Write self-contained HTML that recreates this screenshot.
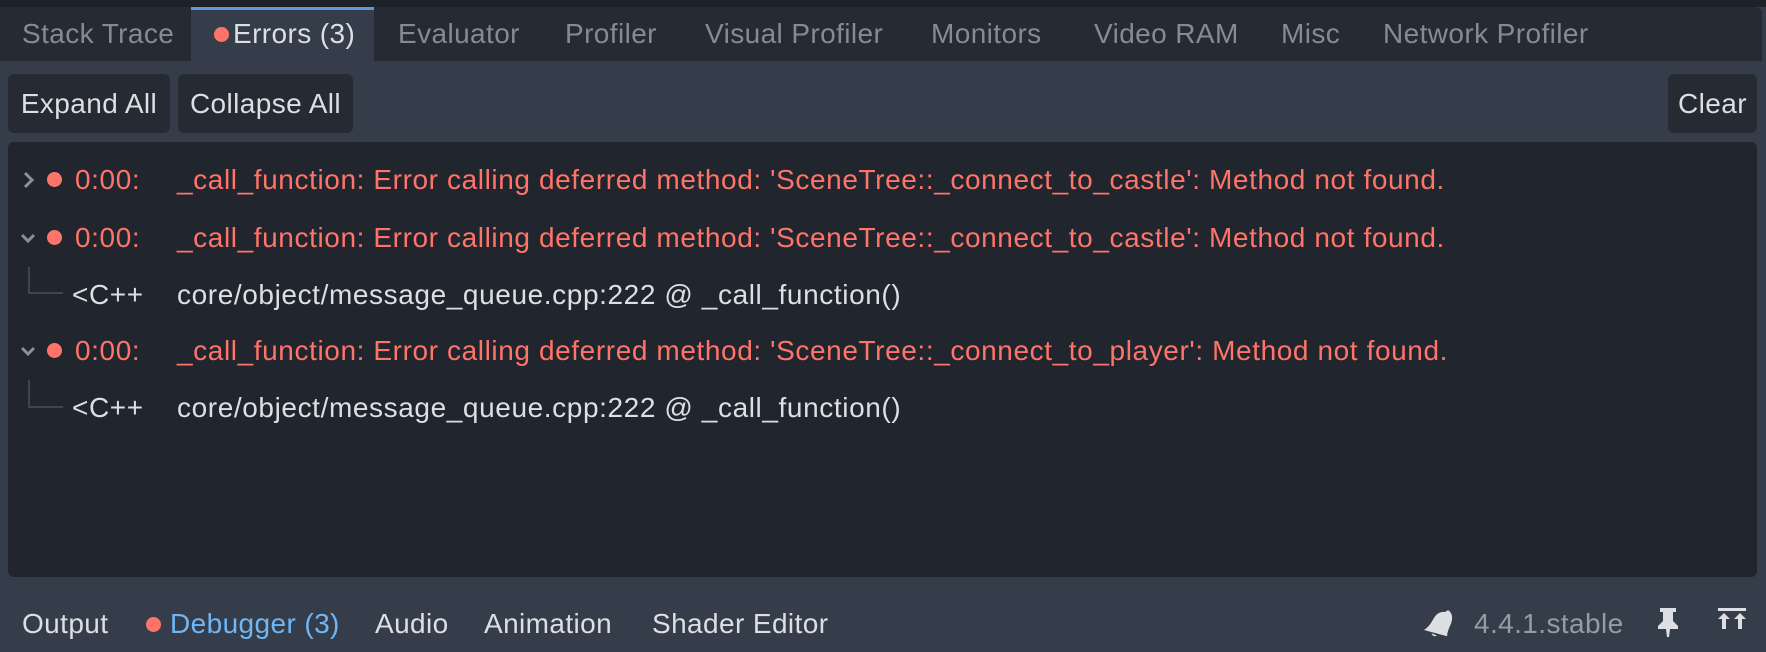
<!DOCTYPE html><html><head><style>
*{margin:0;padding:0;box-sizing:border-box}
body{width:1766px;height:652px;background:#363d4a;font-family:"Liberation Sans",sans-serif;font-size:28px;color:#dcdfe3;position:relative;overflow:hidden;letter-spacing:0.4px}
.abs{position:absolute;white-space:nowrap}
#top{left:0;top:0;width:1766px;height:7px;background:#1d2128}
#tabbar{left:0;top:7px;width:1762px;height:54px;background:#252a33;border-top-right-radius:6px}
.tab{top:7px;height:54px;line-height:54px;color:#858b94}
#sel{left:191px;top:7px;width:183px;height:54px;background:#363d4a;border-top:3px solid #5e9ad6}
.btn{top:74px;height:59px;line-height:59px;background:#252a33;border-radius:6px;text-align:center;color:#dcdfe3}
#panel{left:8px;top:142px;width:1749px;height:435px;background:#21252e;border-radius:6px}
.red{color:#fe7468}
.dot{width:15px;height:15px;border-radius:8px;background:#fe7468}
.row{height:40px;line-height:40px;letter-spacing:0.6px}
.bot{top:604px;line-height:40px;height:40px;color:#dcdfe3}
</style></head><body>
<div class="abs" id="top"></div>
<div class="abs" id="tabbar"></div>
<div class="abs" id="sel"></div>
<div class="abs tab" style="left:22px">Stack Trace</div>
<div class="abs dot" style="left:214px;top:27px"></div>
<div class="abs tab" style="left:233px;color:#dcdfe3">Errors (3)</div>
<div class="abs tab" style="left:398px">Evaluator</div>
<div class="abs tab" style="left:565px">Profiler</div>
<div class="abs tab" style="left:705px">Visual Profiler</div>
<div class="abs tab" style="left:931px">Monitors</div>
<div class="abs tab" style="left:1094px">Video RAM</div>
<div class="abs tab" style="left:1281px">Misc</div>
<div class="abs tab" style="left:1383px">Network Profiler</div>

<div class="abs btn" style="left:8px;width:162px">Expand All</div>
<div class="abs btn" style="left:178px;width:175px">Collapse All</div>
<div class="abs btn" style="left:1668px;width:89px">Clear</div>

<div class="abs" id="panel"></div>
<svg class="abs" style="left:0;top:0" width="200" height="440">
<path d="M25 173 L32 180 L25 187" stroke="#8a8f98" stroke-width="3" fill="none"/>
<path d="M22 235 L28 241 L34 235" stroke="#8a8f98" stroke-width="3" fill="none"/>
<path d="M22 348 L28 354 L34 348" stroke="#8a8f98" stroke-width="3" fill="none"/>
<path d="M29 267 V293 H63 M29 380 V407 H63" stroke="#4a505a" stroke-width="1.5" fill="none"/>
</svg>
<div class="abs dot" style="left:47px;top:172px"></div>
<div class="abs dot" style="left:47px;top:230px"></div>
<div class="abs dot" style="left:47px;top:343px"></div>
<div class="abs row red" style="left:75px;top:160px">0:00:</div>
<div class="abs row red" style="left:177px;top:160px">_call_function: Error calling deferred method: 'SceneTree::_connect_to_castle': Method not found.</div>
<div class="abs row red" style="left:75px;top:218px">0:00:</div>
<div class="abs row red" style="left:177px;top:218px">_call_function: Error calling deferred method: 'SceneTree::_connect_to_castle': Method not found.</div>
<div class="abs row" style="left:72px;top:275px">&lt;C++</div>
<div class="abs row" style="left:177px;top:275px">core/object/message_queue.cpp:222 @ _call_function()</div>
<div class="abs row red" style="left:75px;top:331px">0:00:</div>
<div class="abs row red" style="left:177px;top:331px">_call_function: Error calling deferred method: 'SceneTree::_connect_to_player': Method not found.</div>
<div class="abs row" style="left:72px;top:388px">&lt;C++</div>
<div class="abs row" style="left:177px;top:388px">core/object/message_queue.cpp:222 @ _call_function()</div>

<div class="abs bot" style="left:22px">Output</div>
<div class="abs dot" style="left:146px;top:617px"></div>
<div class="abs bot" style="left:170px;color:#6fb6f6">Debugger (3)</div>
<div class="abs bot" style="left:375px">Audio</div>
<div class="abs bot" style="left:484px">Animation</div>
<div class="abs bot" style="left:652px">Shader Editor</div>
<svg class="abs" style="left:1420px;top:604px" width="40" height="40">
<path d="M6 30 Q10 26 12 18 Q14 8 22 7 Q24 3 27 6 Q32 10 30 20 Q29 26 30 30 Z M14 31 Q17 35 20 32 Z" fill="#dcdfe3" transform="rotate(15 20 20)"/>
</svg>
<div class="abs bot" style="left:1474px;color:#979ca4">4.4.1.stable</div>
<svg class="abs" style="left:1650px;top:604px" width="120" height="40">
<path d="M10 4 H26 V8 H23 V17 L28 22 V25 H20 L19 33 H17 L16 25 H8 V22 L13 17 V8 H10 Z" fill="#dcdfe3"/>
<path d="M68 4 H96 V7 H68 Z M74 9 L80 15 H76 V25 H72 V15 H68 Z M90 9 L96 15 H92 V25 H88 V15 H84 Z" fill="#dcdfe3"/>
</svg>
</body></html>
